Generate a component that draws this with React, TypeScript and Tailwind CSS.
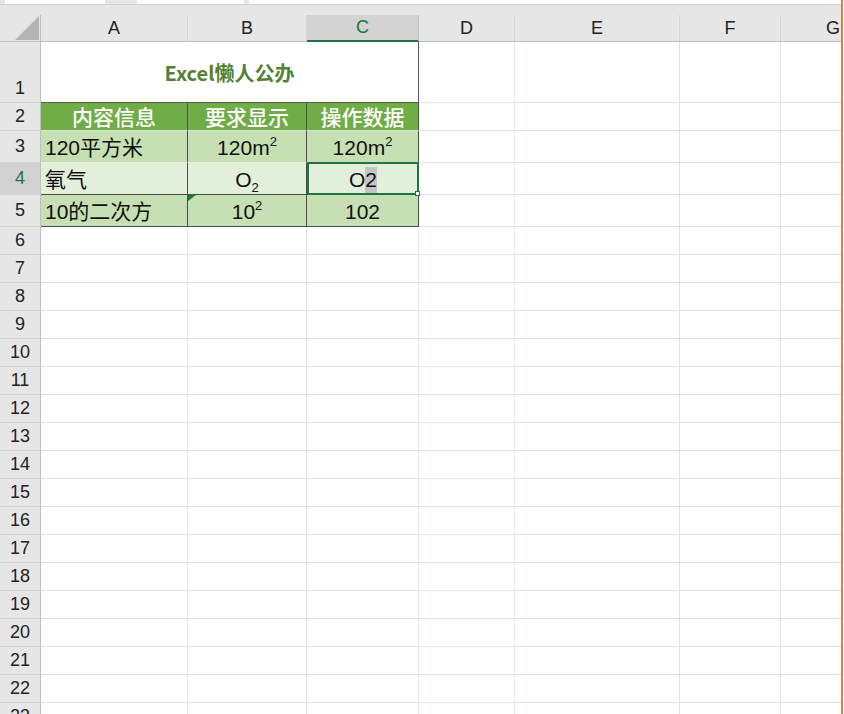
import React from "react";

const FONT = { fontFamily: '"Liberation Sans", "Noto Sans CJK SC", Arial, sans-serif' };

const GRID = "border-[#e1e1e1]";

function RowHead({ n, h, active, bottom }: { n: number; h: string; active?: boolean; bottom?: boolean }) {
  return (
    <div
      className={`w-[41px] shrink-0 flex justify-center border-r border-b border-r-[#bfbfbf] border-b-[#d4d4d4] text-[18px] ${
        active ? "bg-[#d2d2d2] text-[#217346]" : "bg-[#e6e6e6] text-[#222]"
      } ${bottom ? "items-end" : "items-center"} ${h}`}
    >
      {n}
    </div>
  );
}

function EmptyTail() {
  return (
    <>
      <div className="w-[96px] shrink-0 border-r border-b border-r-[#dcf0f5] border-b-[#e4e4e4]" />
      <div className={`w-[165px] shrink-0 border-r border-b ${GRID}`} />
      <div className={`w-[101px] shrink-0 border-r border-b ${GRID}`} />
      <div className={`flex-1 border-b ${GRID}`} />
    </>
  );
}

function Sup({ children }: { children: React.ReactNode }) {
  return <sup className="text-[13px] relative -top-[9px]">{children}</sup>;
}

export default function App() {
  const emptyRows = Array.from({ length: 18 }, (_, i) => i + 6);
  return (
    <div className="w-[844px] h-[714px] overflow-hidden flex bg-white" style={FONT}>
      <div className="flex-1 flex flex-col min-w-0">
        {/* tab strip */}
        <div className="h-[5px] shrink-0 flex bg-[#e6e6e6] border-b border-[#cfcfcf]">
          <div className="ml-[5px] w-[100px] bg-white" />
          <div className="ml-[32px] w-[107px] bg-white" />
          <div className="ml-[5px] flex-1 bg-white" />
        </div>
        {/* column header */}
        <div className="shrink-0 bg-[#e6e6e6] h-[10px]" />
        <div className="shrink-0 flex h-[27px] bg-[#e6e6e6] border-b border-[#bfbfbf] text-[18px] text-[#222]">
          <div className="w-[41px] shrink-0 border-r border-[#bfbfbf] flex items-end justify-end pr-[1px] pb-[1px]">
            <svg width="24" height="24" viewBox="0 0 24 24">
              <polygon points="24,0 24,24 0,24" fill="#b4b4b4" />
            </svg>
          </div>
          <div className="w-[147px] shrink-0 border-r border-[#d5d5d5] flex items-center justify-center">A</div>
          <div className="w-[119px] shrink-0 border-r border-[#d5d5d5] flex items-center justify-center">B</div>
          <div className="w-[112px] shrink-0 border-r border-[#bfbfbf] flex items-center justify-center bg-[#d3d3d3] text-[#217346] border-b-2 border-b-[#217346] -mb-[1px]">C</div>
          <div className="w-[96px] shrink-0 border-r border-[#d5d5d5] flex items-center justify-center">D</div>
          <div className="w-[165px] shrink-0 border-r border-[#d5d5d5] flex items-center justify-center">E</div>
          <div className="w-[101px] shrink-0 border-r border-[#d5d5d5] flex items-center justify-center">F</div>
          <div className="flex-1 flex items-center justify-end pr-[1px]">G</div>
        </div>

        {/* row 1 */}
        <div className="shrink-0 flex h-[61px]">
          <RowHead n={1} h="h-[61px]" bottom />
          <div
            className="w-[378px] shrink-0 border-r border-b border-[#5a5a5a] flex items-center justify-center pt-[2px] text-[20px] font-bold text-[#548235]"
            style={{ fontFamily: '"Noto Sans CJK SC", sans-serif' }}
          >
            Excel懒人公办
          </div>
          <EmptyTail />
        </div>

        {/* row 2 */}
        <div className="shrink-0 flex h-[28px]">
          <RowHead n={2} h="h-[28px]" />
          {["内容信息", "要求显示", "操作数据"].map((t, i) => (
            <div
              key={t}
              className={`${["w-[147px]", "w-[119px]", "w-[112px]"][i]} shrink-0 bg-[#70ad47] text-white border-r border-b border-r-[#4d4d4d] border-b-[#d9e6cf] flex items-center justify-center text-[21px] font-medium leading-none`}
              style={{ fontFamily: '"Noto Sans CJK SC", sans-serif' }}
            >
              {t}
            </div>
          ))}
          <EmptyTail />
        </div>

        {/* row 3 */}
        <div className="shrink-0 flex h-[32px]">
          <RowHead n={3} h="h-[32px]" />
          <div className="w-[147px] shrink-0 bg-[#c6e0b4] border-r border-b border-r-[#4d4d4d] border-b-[#e3eedb] flex items-center pl-[4px] pt-[2px] text-[21px] text-[#111]">120平方米</div>
          <div className="w-[119px] shrink-0 bg-[#c6e0b4] border-r border-b border-r-[#4d4d4d] border-b-[#e3eedb] flex items-center justify-center pt-[2px] text-[21px] text-[#111]">
            <span>120m<Sup>2</Sup></span>
          </div>
          <div className="w-[112px] shrink-0 bg-[#c6e0b4] border-r border-b border-r-[#4d4d4d] border-b-[#e3eedb] flex items-center justify-center pt-[2px] text-[21px] text-[#111]">
            <span>120m<Sup>2</Sup></span>
          </div>
          <EmptyTail />
        </div>

        {/* row 4 */}
        <div className="shrink-0 flex h-[32px]">
          <RowHead n={4} h="h-[32px]" active />
          <div className="w-[147px] shrink-0 bg-[#e2efda] border-r border-b border-r-[#4d4d4d] border-b-[#4d4d4d] flex items-center pl-[4px] pt-[2px] text-[21px] text-[#111]">氧气</div>
          <div className="w-[119px] shrink-0 bg-[#e2efda] border-r border-b border-r-[#4d4d4d] border-b-[#4d4d4d] flex items-center justify-center pt-[2px] text-[21px] text-[#111]">
            <span>O<sub className="text-[13px] relative top-[5px]">2</sub></span>
          </div>
          <div className="relative w-[112px] shrink-0 bg-[#e2efda] border-2 border-[#217346] -mt-[1px] h-[33px] flex items-center justify-center pt-[2px] text-[21px] text-[#111]">
            <span>O<span className="bg-[#c4c4c4] inline-block h-[26px] leading-[26px]">2</span></span>
            <div className="absolute -right-[3px] -bottom-[3px] w-[5px] h-[5px] bg-white border border-[#217346]" />
          </div>
          <EmptyTail />
        </div>

        {/* row 5 */}
        <div className="shrink-0 flex h-[32px]">
          <RowHead n={5} h="h-[32px]" />
          <div className="w-[147px] shrink-0 bg-[#c6e0b4] border-r border-b border-[#4d4d4d] flex items-center pl-[4px] pt-[2px] text-[21px] text-[#111]">10的二次方</div>
          <div className="relative w-[119px] shrink-0 bg-[#c6e0b4] border-r border-b border-[#4d4d4d] flex items-center justify-center pt-[2px] text-[21px] text-[#111]">
            <svg className="absolute left-0 top-0" width="8" height="6" viewBox="0 0 8 6">
              <polygon points="0,0 8,0 0,6" fill="#1e7b34" />
            </svg>
            <span>10<Sup>2</Sup></span>
          </div>
          <div className="w-[112px] shrink-0 bg-[#c6e0b4] border-r border-b border-[#4d4d4d] flex items-center justify-center pt-[2px] text-[21px] text-[#111]">102</div>
          <EmptyTail />
        </div>

        {emptyRows.map((n) => (
          <div key={n} className="shrink-0 flex h-[28px]">
            <RowHead n={n} h="h-[28px]" />
            <div className="w-[147px] shrink-0 border-r border-b border-r-[#e6eaea] border-b-[#e1e1e1]" />
            <div className={`w-[119px] shrink-0 border-r border-b ${GRID}`} />
            <div className="w-[112px] shrink-0 border-r border-b border-r-[#dcf0f5] border-b-[#e1e1e1]" />
            <EmptyTail />
          </div>
        ))}
      </div>
      <div className="w-[2px] shrink-0 bg-[#d9834a]" />
      <div className="w-[1px] shrink-0 bg-white" />
    </div>
  );
}
